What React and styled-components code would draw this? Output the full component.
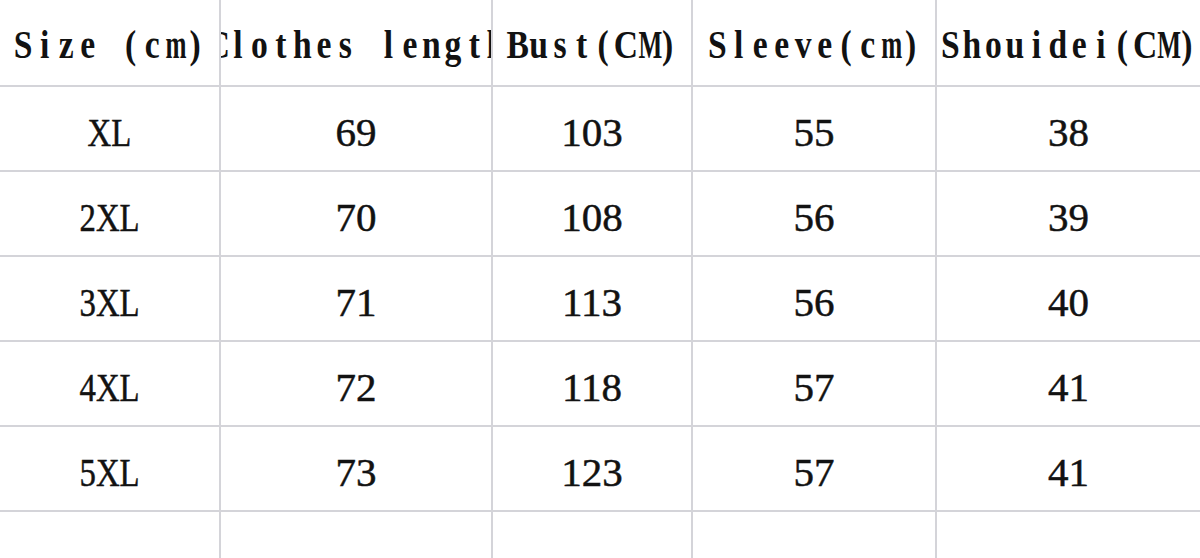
import React from 'react'
import styled, { createGlobalStyle } from 'styled-components'

const GlobalStyle = createGlobalStyle`
	html, body {
		margin: 0;
		padding: 0;
		background: #ffffff;
	}
`

const Sheet = styled.div`
	width: 1200px;
	height: 558px;
	overflow: hidden;
	background: #ffffff;
	display: grid;
	grid-template-columns: 221px 272px 200px 244px 1fr;
	grid-template-rows: 87px repeat(5, 85px) 1fr;
	color: #121212;
`

const Cell = styled.div`
	display: flex;
	align-items: center;
	justify-content: center;
	overflow: hidden;
	white-space: nowrap;
	box-sizing: border-box;
	padding-top: ${props => props.$head ? '4px' : '6px'};
	border-right: ${props => props.$last ? 'none' : '2px solid #d4d4d9'};
	border-bottom: ${props => props.$bottom ? 'none' : '2px solid #d4d4d9'};
`

const HeadText = styled.span`
	display: inline-flex;
	flex-shrink: 0;
	font-family: "Liberation Serif", "Times New Roman", serif;
	font-weight: bold;
	font-size: 40px;
	transform: scaleX(0.84);
	transform-origin: center;
`

const Glyph = styled.span`
	display: inline-block;
	width: 25.6px;
	text-align: center;
	transform: scaleX(${props => props.$wide ? 0.75 : 1});
`

const BodyText = styled.span`
	display: inline-block;
	flex-shrink: 0;
	font-family: "Liberation Serif", "Times New Roman", serif;
	font-size: 41px;
	-webkit-text-stroke: 0.5px #121212;
	transform: scaleX(${props => props.$narrow ? 0.8 : 1});
	transform-origin: center;
`

const headers = ['Size (cm)', 'Clothes length', 'Bust(CM)', 'Sleeve(cm)', 'Shouidei(CM)']

const rows = [
	['XL', '69', '103', '55', '38'],
	['2XL', '70', '108', '56', '39'],
	['3XL', '71', '113', '56', '40'],
	['4XL', '72', '118', '57', '41'],
	['5XL', '73', '123', '57', '41'],
	['', '', '', '', ''],
]

export default () => {
	return (
		<>
			<GlobalStyle />
			<Sheet>
				{headers.map((h, i) => (
					<Cell key={'h' + i} $head $last={i === headers.length - 1}>
						<HeadText>
							{[...h].map((ch, k) => (
								<Glyph key={k} $wide={ch === 'M' || ch === 'm'}>
									{ch === ' ' ? '\u00a0' : ch}
								</Glyph>
							))}
						</HeadText>
					</Cell>
				))}
				{rows.map((row, r) => row.map((val, c) => (
					<Cell
						key={r + '-' + c}
						$last={c === row.length - 1}
						$bottom={r === rows.length - 1}
					>
						<BodyText $narrow={c === 0}>{val}</BodyText>
					</Cell>
				)))}
			</Sheet>
		</>
	)
}
